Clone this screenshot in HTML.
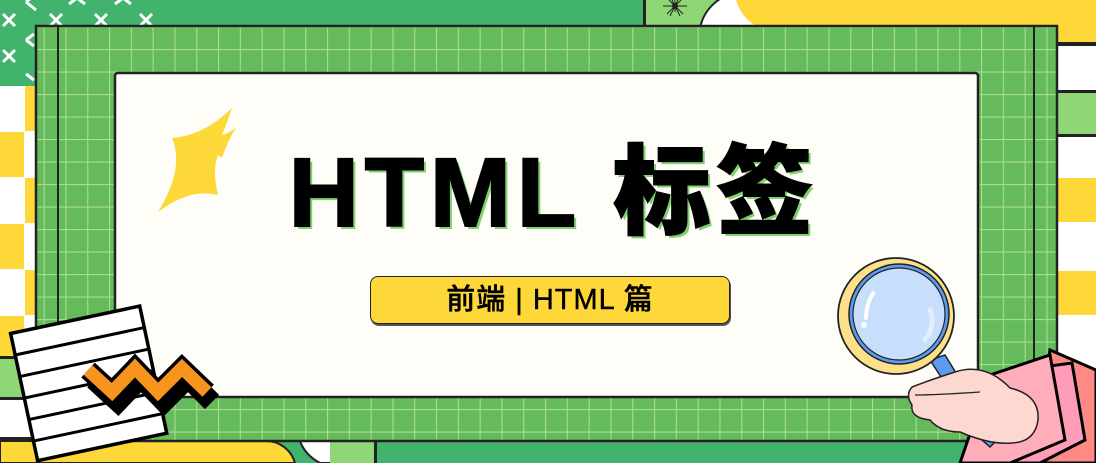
<!DOCTYPE html>
<html><head><meta charset="utf-8"><style>
body{margin:0;width:1096px;height:463px;overflow:hidden;background:#41b36c;position:relative;font-family:"Liberation Sans","Noto Sans CJK SC",sans-serif}
svg{position:absolute;left:0;top:0}
.t{position:absolute;left:0;width:1096px;text-align:center;top:128px;font-family:"Liberation Sans","Noto Sans CJK SC",sans-serif;font-weight:900;font-size:97px;line-height:130px;letter-spacing:6px;color:#000;text-shadow:3px 3px 0 #7ed36f;-webkit-text-stroke:2px #000;padding-left:6px}
.p{position:absolute;left:370px;top:276px;width:358px;height:46px;background:#fed838;border:1.5px solid #222;border-radius:8px;box-shadow:1px 2px 0 #555;text-align:center;line-height:46px;font-size:29px;letter-spacing:1px;font-weight:500;color:#000;font-family:"Liberation Sans","Noto Sans CJK SC",sans-serif;-webkit-text-stroke:0.4px #000}
</style></head><body>
<svg width="1096" height="463" viewBox="0 0 1096 463">
<defs>
<pattern id="g" x="0" y="4" width="21.8" height="22.5" patternUnits="userSpaceOnUse">
<rect width="21.8" height="22.5" fill="#65bb5c"/>
<path d="M0.5 0V22.5M0 0.5H21.8" stroke="#a6dd8f" stroke-width="1.2"/>
</pattern>
</defs>
<rect x="0" y="86" width="36" height="377" fill="#fff"/>
<rect x="25" y="86" width="11" height="45" fill="#fed838"/>
<rect x="0" y="132" width="24" height="45" fill="#fed838"/>
<rect x="25" y="178" width="11" height="45" fill="#fed838"/>
<rect x="0" y="224" width="24" height="45" fill="#fed838"/>
<rect x="25" y="270" width="11" height="45" fill="#fed838"/>
<rect x="0" y="316" width="24" height="40" fill="#fed838"/>
<rect x="0" y="358" width="36" height="40" fill="#8fd776"/>
<rect x="0" y="356" width="36" height="3" fill="#222"/>
<rect x="0" y="397" width="36" height="3" fill="#222"/>
<rect x="0" y="437" width="36" height="3" fill="#222"/>
<rect x="0" y="440" width="36" height="23" fill="#fed838"/>
<g stroke="#fff" stroke-width="3" fill="none">
<path d="M3 14l12 12M15 14l-12 12M50 14l12 12M62 14l-12 12M95 14l12 12M107 14l-12 12M140 14l12 12M152 14l-12 12M3 50l12 12M15 50l-12 12M26 2l10 -8M26 2l10 8M69 4l8-6 8 6M115 4l8-6 8 6M26 40l8 -6M26 74l8 6M26 40l8 6"/>
</g>
<rect x="1057" y="0" width="39" height="463" fill="#fff"/>
<rect x="735" y="0" width="361" height="42" fill="#fed838"/>
<rect x="1057" y="42" width="39" height="4" fill="#222"/>
<rect x="1057" y="93" width="39" height="41" fill="#8fd776"/>
<rect x="1057" y="90" width="39" height="3" fill="#222"/>
<rect x="1057" y="134" width="39" height="3" fill="#222"/>
<rect x="1057" y="178" width="39" height="44" fill="#fed838"/>
<rect x="1057" y="271" width="39" height="44" fill="#fed838"/>
<rect x="645" y="0" width="100" height="26" fill="#8fd776"/>
<rect x="643" y="0" width="3" height="26" fill="#222"/>
<path d="M700 28 A45 45 0 0 1 745 -8 L760 28Z" fill="#fff" stroke="#222" stroke-width="2"/>
<path d="M736 0 Q742 20 760 28 L1096 28 L1096 0Z" fill="#fed838"/>
<g stroke="#222" stroke-width="1"><path d="M675 0L675 12M663 6L687 6M667 -2L683 14M683 -2L667 14M670 -4L680 16M680 -4L670 16"/></g>
<circle cx="675" cy="6" r="3" fill="#222"/>
<rect x="0" y="441" width="1096" height="22" fill="#41b36c"/>
<path d="M0 441 H265 A30 30 0 0 1 295 463 H0Z" fill="#fed838" stroke="#222" stroke-width="2"/>
<path d="M300 441 Q305 455 320 463 L330 463 Q340 455 342 441Z" fill="#fff" stroke="#222" stroke-width="2"/>
<rect x="330" y="441" width="45" height="22" fill="#8fd776"/>
<rect x="374" y="441" width="3" height="22" fill="#222"/>
<rect x="36" y="26" width="1021" height="415" fill="url(#g)" stroke="#222" stroke-width="2.5"/>
<path d="M58 27V440M1034 27V440" stroke="#222" stroke-width="2"/>
<rect x="115" y="73" width="863" height="324" rx="3" fill="#fefdf8" stroke="#222" stroke-width="2.5"/>
<path d="M232 108 Q205 135 172 138 Q185 168 158 212 Q190 188 218 195 Q212 170 218 155 L222 158 Q228 140 236 128 Q225 135 222 135 Q228 120 232 108Z" fill="#fed838"/>
<g transform="rotate(-12 90 380)">
<rect x="22" y="318" width="132" height="130" fill="#fff" stroke="#000" stroke-width="3.5"/>
<path d="M22 340H154M22 362H154M22 384H154M22 406H154M22 428H154" stroke="#000" stroke-width="3"/>
</g>
<polyline points="94,380 118,402 141,378 164,402 188,378 212,402" fill="none" stroke="#000" stroke-width="20" stroke-linejoin="miter"/>
<polyline points="88,370 112,392 135,368 158,392 182,368 207,392" fill="none" stroke="#000" stroke-width="20" stroke-linejoin="miter"/>
<polyline points="88,370 112,392 135,368 158,392 182,368 207,392" fill="none" stroke="#f7941e" stroke-width="13" stroke-linejoin="miter"/>
<path d="M1050 350 L1096 370 L1096 463 L1030 463Z" fill="#ff8a85" stroke="#000" stroke-width="3"/>
<path d="M1020 370 L1072 363 L1085 440 L1040 463 L990 463Z" fill="#ff9db8" stroke="#000" stroke-width="3"/>
<path d="M990 375 L1050 355 L1065 440 L1010 463 L960 463 Z" fill="#ffadba" stroke="#000" stroke-width="3"/>
<path d="M930 360 L982 440 L990 447 L997 440 L945 355Z" fill="#5b9cf0" stroke="#222" stroke-width="1.5"/>
<path d="M955 372 Q985 362 1010 388 Q1040 395 1038 420 Q1035 442 1012 443 Q990 445 960 432 Q940 432 930 420 Q910 418 912 405 Q905 395 912 387 Q930 380 955 372Z" fill="#fcd8d0" stroke="#222" stroke-width="1.5"/>
<path d="M915 395 Q935 395 980 392" stroke="#222" stroke-width="1.2" fill="none"/>
<circle cx="896" cy="316" r="58" fill="#fde18a" stroke="#222" stroke-width="1.8"/>
<circle cx="899" cy="314" r="50" fill="#5b9cf0" stroke="#222" stroke-width="1.5"/>
<circle cx="899" cy="314" r="46" fill="#c7dffc" stroke="#222" stroke-width="1.2"/>
<path d="M873 293 Q866 305 866 318" stroke="#fff" stroke-width="4" stroke-linecap="round" fill="none"/>
<circle cx="864" cy="325" r="3" fill="#fff"/>
<path d="M930 310 Q936 325 925 340" stroke="#e3eefc" stroke-width="5" stroke-linecap="round" fill="none"/>
</svg>
<div class="t">HTML 标签</div>
<div class="p">前端 | HTML 篇</div>
</body></html>
